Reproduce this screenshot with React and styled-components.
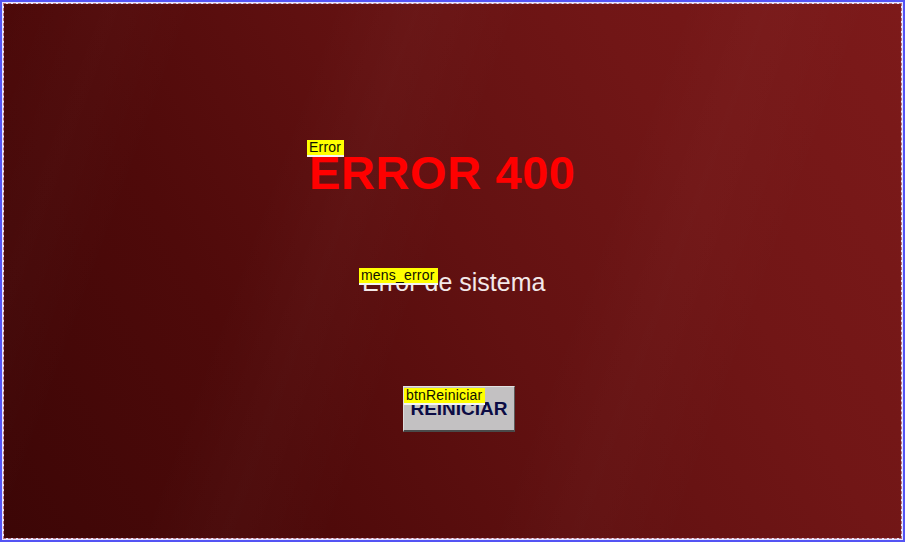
import React from "react";
import styled, { createGlobalStyle } from "styled-components";

const GlobalStyle = createGlobalStyle`
  html, body {
    margin: 0;
    padding: 0;
    background: #ffffff;
  }
  body {
    font-family: "Liberation Sans", Arial, sans-serif;
  }
`;

const Frame = styled.div`
  box-sizing: border-box;
  width: 905px;
  height: 542px;
  border: 2px solid #5454f4;
  padding: 1px;
  background: #e6e6ff;
  display: flex;
`;

const Canvas = styled.div`
  flex: 1;
  display: flex;
  flex-direction: column;
  align-items: flex-start;
  border: 1px dashed #b8707c;
  background-clip: padding-box;
  background-image:
    linear-gradient(
      110deg,
      rgba(255, 255, 255, 0) 0%,
      rgba(255, 255, 255, 0.015) 10%,
      rgba(255, 255, 255, 0) 18%,
      rgba(255, 255, 255, 0) 30%,
      rgba(255, 255, 255, 0.02) 38%,
      rgba(255, 255, 255, 0) 48%,
      rgba(255, 255, 255, 0) 62%,
      rgba(255, 255, 255, 0.015) 70%,
      rgba(255, 255, 255, 0) 80%
    ),
    linear-gradient(62deg, #3c0606 0%, #4f0a0a 28%, #621111 52%, #711616 74%, #7d1a1a 100%);
`;

const Control = styled.div`
  position: relative;
  margin-top: ${(p) => p.$top}px;
  margin-left: ${(p) => p.$left}px;
  padding-top: ${(p) => p.$pad || 0}px;
`;

const Tag = styled.span`
  position: absolute;
  top: ${(p) => p.$top || 0}px;
  left: ${(p) => p.$left || 0}px;
  z-index: 2;
  background: #ffff00;
  color: #111100;
  font-size: 14px;
  line-height: 15px;
  padding: 0 3px 0 2px;
  border-bottom: 2px solid #f4f4f4;
  letter-spacing: 0.2px;
  white-space: nowrap;
`;

const Title = styled.h1`
  margin: 0 0 0 2px;
  font-size: 47px;
  line-height: 1;
  font-weight: bold;
  color: #ff0000;
  letter-spacing: 0.6px;
`;

const Message = styled.p`
  margin: 0 0 0 3px;
  font-size: 25px;
  line-height: 1;
  color: #f3e9e9;
  letter-spacing: 0;
`;

const Button = styled.button`
  box-sizing: border-box;
  width: 112px;
  height: 46px;
  margin: 0;
  padding: 0;
  background: #c3c1c2;
  border: 1px solid;
  border-color: #e2e2e2 #5a5a5a #4a4a4a #dcdcdc;
  border-bottom-width: 2px;
  font-family: "Liberation Sans", Arial, sans-serif;
  font-size: 19px;
  font-weight: bold;
  color: #0c0c44;
  display: flex;
  align-items: center;
  justify-content: center;
`;

export default function App() {
  return (
    <>
      <GlobalStyle />
      <Frame>
        <Canvas>
          <Control $top={136} $left={303} $pad={9}>
            <Tag>Error</Tag>
            <Title>ERROR 400</Title>
          </Control>
          <Control $top={72} $left={355} $pad={2}>
            <Tag>mens_error</Tag>
            <Message>Error de sistema</Message>
          </Control>
          <Control $top={91} $left={399}>
            <Tag $top={2} $left={1}>
              btnReiniciar
            </Tag>
            <Button type="button">REINICIAR</Button>
          </Control>
        </Canvas>
      </Frame>
    </>
  );
}
